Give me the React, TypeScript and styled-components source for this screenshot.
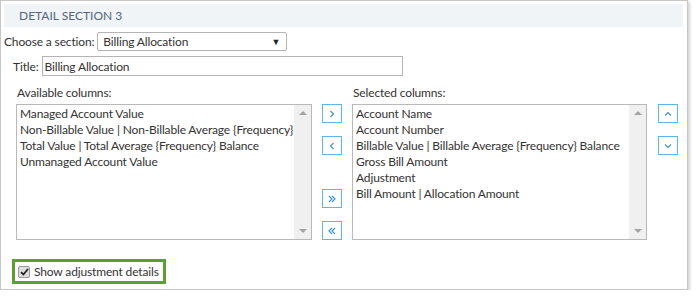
import React from 'react';
import styled, { createGlobalStyle } from 'styled-components';

const GlobalStyle = createGlobalStyle`
  body {
    margin: 0;
    background: #fff;
    font-family: Lato, "Open Sans", sans-serif;
    color: #333;
  }
`;

const Panel = styled.div`
  width: 688px;
  height: 290px;
  border: 1px solid #c6c6c6;
  box-shadow: 2px 2px 3px rgba(0, 0, 0, 0.18);
  padding: 3px;
  box-sizing: border-box;
  background: #fff;
  display: flex;
  flex-direction: column;
  font-size: 12px;
  letter-spacing: -0.15px;
`;

const Header = styled.div`
  height: 23px;
  background: #f0f4f7;
  margin-right: 1px;
  padding-left: 15px;
  display: flex;
  align-items: center;
  font-size: 12px;
  letter-spacing: 0;
  color: #56657a;
`;

const FieldRow = styled.div<{ indent?: number }>`
  display: flex;
  align-items: center;
  gap: 3px;
  margin-top: 5px;
  padding-left: ${({ indent }) => indent ?? 0}px;
`;

const Select = styled.div`
  width: 190px;
  height: 19px;
  box-sizing: border-box;
  border: 1px solid #b4b4b4;
  border-radius: 2px;
  padding: 0 6px 0 5px;
  display: flex;
  align-items: center;
  justify-content: space-between;
`;

const Caret = styled.span`
  font-size: 9px;
  color: #222;
`;

const TextInput = styled.div`
  width: 361px;
  height: 20px;
  box-sizing: border-box;
  border: 1px solid #b4b4b4;
  padding-left: 2px;
  display: flex;
  align-items: center;
`;

const Columns = styled.div`
  display: grid;
  grid-template-columns: 296px 20px 295px 21px;
  column-gap: 10px;
  margin: 10px 0 0 12px;
`;

const ColLabel = styled.div<{ col: number }>`
  grid-row: 1;
  grid-column: ${({ col }) => col};
  padding-left: 1px;
  height: 18px;
  line-height: 14px;
`;

const ListBox = styled.div`
  grid-row: 2;
  height: 136px;
  box-sizing: border-box;
  border: 1px solid #b9b9b9;
  display: flex;
  min-width: 0;
`;

const Items = styled.div`
  flex: 1;
  padding: 1px 0 0 3px;
  overflow: hidden;
`;

const Item = styled.div`
  height: 16px;
  line-height: 16px;
  white-space: nowrap;
`;

const Scroll = styled.div`
  width: 17px;
  background: #f0f0f0;
  display: flex;
  flex-direction: column;
  justify-content: space-between;
  align-items: center;
  padding: 6px 0;
`;

const ScrollArrow = styled.span<{ down?: boolean }>`
  width: 0;
  height: 0;
  border-left: 4px solid transparent;
  border-right: 4px solid transparent;
  ${({ down }) =>
    down ? 'border-top: 4px solid #a3a3a3;' : 'border-bottom: 4px solid #a3a3a3;'}
`;

const ButtonStack = styled.div<{ end?: boolean }>`
  grid-row: 2;
  display: flex;
  flex-direction: column;
  align-items: ${({ end }) => (end ? 'flex-end' : 'flex-start')};
`;

const MoveButton = styled.div<{ gapTop?: number }>`
  width: 20px;
  height: 19px;
  box-sizing: border-box;
  border: 1px solid #5fb6e8;
  margin-top: ${({ gapTop }) => gapTop ?? 0}px;
  display: flex;
  align-items: center;
  justify-content: center;
  color: #3a8fd0;
`;

const Spacer = styled.div`
  flex: 1;
`;

const Highlight = styled.div`
  align-self: flex-start;
  margin: 19px 0 0 8px;
  height: 25px;
  box-sizing: border-box;
  border: 3px solid #5c9f32;
  display: flex;
  align-items: center;
  gap: 4px;
  padding: 0 4px 0 3px;
  white-space: nowrap;
`;

const CheckBox = styled.span`
  width: 12px;
  height: 12px;
  box-sizing: border-box;
  border: 1px solid #9a9a9a;
  border-radius: 2px;
  background: #dedede;
  display: flex;
  align-items: center;
  justify-content: center;
`;

const Chevron: React.FC<{ dir: 'right' | 'left' | 'up' | 'down'; double?: boolean }> = ({ dir, double }) => {
  const rot = { right: 0, down: 90, left: 180, up: 270 }[dir];
  return (
    <svg width="10" height="10" viewBox="0 0 10 10" style={{ transform: `rotate(${rot}deg)` }}>
      {double ? (
        <>
          <path d="M2 2 L5 5 L2 8" fill="none" stroke="currentColor" strokeWidth="1.1" />
          <path d="M5 2 L8 5 L5 8" fill="none" stroke="currentColor" strokeWidth="1.1" />
        </>
      ) : (
        <path d="M3.5 2 L6.5 5 L3.5 8" fill="none" stroke="currentColor" strokeWidth="1.1" />
      )}
    </svg>
  );
};

const available = [
  'Managed Account Value',
  'Non-Billable Value | Non-Billable Average {Frequency}',
  'Total Value | Total Average {Frequency} Balance',
  'Unmanaged Account Value',
];

const selected = [
  'Account Name',
  'Account Number',
  'Billable Value | Billable Average {Frequency} Balance',
  'Gross Bill Amount',
  'Adjustment',
  'Bill Amount | Allocation Amount',
];

const List: React.FC<{ items: string[] }> = ({ items }) => (
  <ListBox>
    <Items>
      {items.map(i => (
        <Item key={i}>{i}</Item>
      ))}
    </Items>
    <Scroll>
      <ScrollArrow />
      <ScrollArrow down />
    </Scroll>
  </ListBox>
);

export default function App() {
  return (
    <>
      <GlobalStyle />
      <Panel>
        <Header>DETAIL SECTION 3</Header>
        <FieldRow>
          <span>Choose a section:</span>
          <Select>
            <span>Billing Allocation</span>
            <Caret>▼</Caret>
          </Select>
        </FieldRow>
        <FieldRow indent={9}>
          <span>Title:</span>
          <TextInput>Billing Allocation</TextInput>
        </FieldRow>
        <Columns>
          <ColLabel col={1}>Available columns:</ColLabel>
          <ColLabel col={3}>Selected columns:</ColLabel>
          <List items={available} />
          <ButtonStack>
            <MoveButton><Chevron dir="right" /></MoveButton>
            <MoveButton gapTop={13}><Chevron dir="left" /></MoveButton>
            <Spacer />
            <MoveButton><Chevron dir="right" double /></MoveButton>
            <MoveButton gapTop={13}><Chevron dir="left" double /></MoveButton>
          </ButtonStack>
          <List items={selected} />
          <ButtonStack end>
            <MoveButton><Chevron dir="up" /></MoveButton>
            <MoveButton gapTop={13}><Chevron dir="down" /></MoveButton>
          </ButtonStack>
        </Columns>
        <Highlight>
          <CheckBox>
            <svg width="9" height="8" viewBox="0 0 9 8">
              <path d="M1 4.2 L3.4 6.5 L8 1" fill="none" stroke="#222" strokeWidth="1.8" />
            </svg>
          </CheckBox>
          <span>Show adjustment details</span>
        </Highlight>
      </Panel>
    </>
  );
}
